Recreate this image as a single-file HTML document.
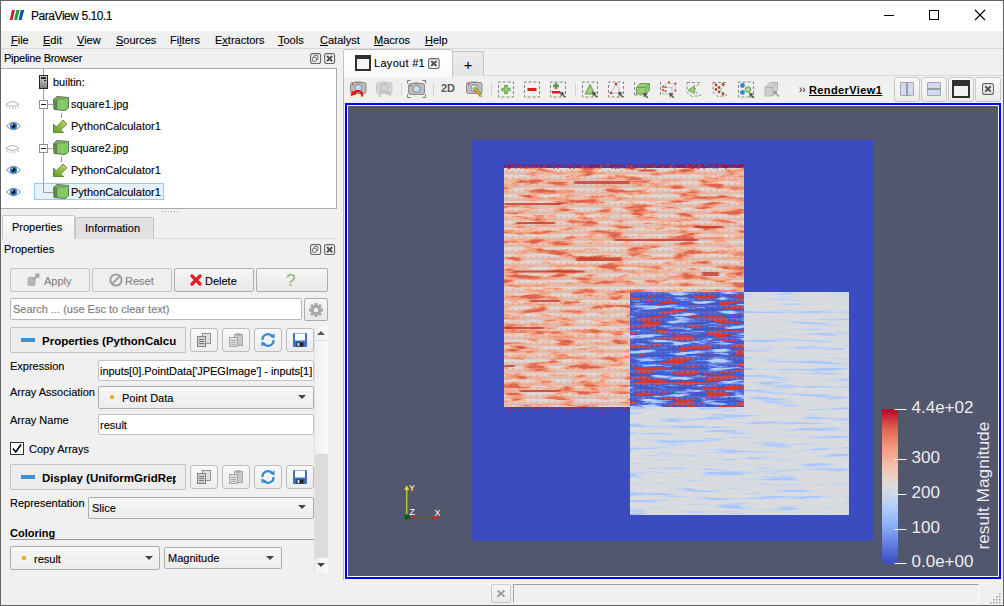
<!DOCTYPE html>
<html><head><meta charset="utf-8">
<style>
*{box-sizing:border-box}
html,body{margin:0;padding:0;width:1004px;height:606px;overflow:hidden;background:#f0f0f0;font-family:"Liberation Sans",sans-serif;font-size:11px;color:#000}
.a{position:absolute}
.t{position:absolute;white-space:nowrap;line-height:13px;-webkit-text-stroke:0.12px currentColor}
.u{text-decoration:underline}
.btn{position:absolute;border:1px solid #adadad;border-radius:2px;background:linear-gradient(#f6f6f6,#e8e8e8)}
.fld{position:absolute;border:1px solid #abadb3;border-radius:2px;background:#fff}
.cmb{position:absolute;border:1px solid #adadad;border-radius:2px;background:linear-gradient(#f7f7f7,#ececec)}
.arr{position:absolute;width:0;height:0;border-left:4px solid transparent;border-right:4px solid transparent;border-top:4px solid #444}
.dot{position:absolute;width:4px;height:4px;background:#e8b020;border-radius:1px}
.b{font-weight:bold;-webkit-text-stroke:0}
</style></head><body>
<div class="a" style="left:0;top:0;width:1004px;height:606px;background:#f0f0f0"></div>
<!-- title bar -->
<div class="a" style="left:0;top:0;width:1004px;height:31px;background:#fff"></div>
<svg class="a" style="left:9px;top:9px" width="17" height="12" viewBox="0 0 17 12">
<polygon points="0.7,11 3.6,11 6,1 3,1" fill="#c8202a"/>
<polygon points="5.1,11 8.1,11 10.6,1 7.3,1" fill="#20a040"/>
<polygon points="9.6,11 12.5,11 15.3,1 11.8,1" fill="#1050a0"/>
</svg>
<div class="t" style="left:31px;top:10px;font-size:12px;letter-spacing:-0.45px">ParaView 5.10.1</div>
<div class="a" style="left:884px;top:15px;width:10px;height:1px;background:#000"></div>
<div class="a" style="left:929px;top:10px;width:10px;height:10px;border:1px solid #000"></div>
<svg class="a" style="left:974px;top:9px" width="12" height="12"><path d="M1,1 L11,11 M11,1 L1,11" stroke="#000" stroke-width="1.1"/></svg>
<!-- menu -->
<div class="a" style="left:0;top:48px;width:1004px;height:1px;background:#dadada"></div>
<div class="t" style="left:11px;top:34px"><span class="u">F</span>ile</div>
<div class="t" style="left:43px;top:34px"><span class="u">E</span>dit</div>
<div class="t" style="left:77px;top:34px"><span class="u">V</span>iew</div>
<div class="t" style="left:116px;top:34px"><span class="u">S</span>ources</div>
<div class="t" style="left:170px;top:34px">Fi<span class="u">l</span>ters</div>
<div class="t" style="left:215px;top:34px">E<span class="u">x</span>tractors</div>
<div class="t" style="left:278px;top:34px"><span class="u">T</span>ools</div>
<div class="t" style="left:320px;top:34px"><span class="u">C</span>atalyst</div>
<div class="t" style="left:374px;top:34px"><span class="u">M</span>acros</div>
<div class="t" style="left:425px;top:34px"><span class="u">H</span>elp</div>

<!-- LEFT DOCK -->
<div class="t" style="left:4px;top:52px;letter-spacing:-0.28px">Pipeline Browser</div>
<svg class="a" style="left:310px;top:53px" width="26" height="11" viewBox="0 0 26 11">
<rect x="0.6" y="0.6" width="10" height="10" rx="2" fill="#f6f6f6" stroke="#666" stroke-width="1.1"/>
<rect x="3.8" y="2.6" width="4.2" height="4.2" rx="1" fill="none" stroke="#666" stroke-width="1"/><rect x="2.4" y="4.4" width="4" height="4" rx="1" fill="#f6f6f6" stroke="#666" stroke-width="1"/>
<rect x="14.6" y="0.6" width="10" height="10" rx="2" fill="#f6f6f6" stroke="#666" stroke-width="1.1"/>
<path d="M17,3 L22.2,8.2 M22.2,3 L17,8.2" stroke="#555" stroke-width="2"/>
</svg>
<!-- tree -->
<div class="a" style="left:1px;top:68px;width:336px;height:141px;background:#fff;border:1px solid #a9a9a9;border-left:none"></div>
<div class="a" style="left:34px;top:183px;width:130px;height:17px;background:#e5f1fb;border:1px solid #99c9ef"></div>
<div class="a" style="left:43px;top:69px;width:1px;height:124px;background:#a0a0a0"></div>
<div class="a" style="left:43px;top:192px;width:10px;height:1px;background:#a0a0a0"></div>
<!-- builtin icon -->
<svg class="a" style="left:39px;top:75px" width="9" height="14" viewBox="0 0 9 14">
<defs><linearGradient id="gs" x1="0" y1="0" x2="0" y2="1"><stop offset="0" stop-color="#d8d8d8"/><stop offset="1" stop-color="#7a7a7a"/></linearGradient></defs>
<rect x="0.5" y="0.5" width="8" height="13" fill="url(#gs)" stroke="#222"/>
<rect x="2" y="2" width="5" height="2" fill="#222"/><rect x="5" y="5" width="2" height="1" fill="#222"/>
</svg>
<div class="t" style="left:53px;top:76px">builtin:</div>
<!-- rows -->
<svg class="a" style="left:5px;top:100px" width="15" height="10" viewBox="0 0 15 10">
<path d="M0.8,4.5 Q7.5,-1.5 14.2,4.5" fill="none" stroke="#a8a8a8" stroke-width="0.9"/>
<path d="M0.8,4.5 Q7.5,8 14.2,4.5" fill="none" stroke="#a8a8a8" stroke-width="0.9"/>
<path d="M2.5,6 L1.5,8 M5,7 L4.5,9 M7.5,7.3 L7.5,9.3 M10,7 L10.5,9 M12.5,6 L13.5,8" stroke="#b0b0b0" stroke-width="0.8"/>
</svg>
<div class="a" style="left:39px;top:100px;width:9px;height:9px;border:1px solid #909090;background:#fff"></div><div class="a" style="left:41px;top:104px;width:5px;height:1px;background:#222"></div><div class="a" style="left:48px;top:104px;width:5px;height:1px;background:#a0a0a0"></div>
<svg class="a" style="left:53px;top:96px" width="16" height="15" viewBox="0 0 16 15">
<path d="M0.5,3.5 L4,0.5 L15.5,1.5 L15.5,12 L12,14.5 L1,13.5 Z" fill="#5e8e46" stroke="#5a6650" stroke-width="0.9"/>
<path d="M4,3.5 L15,2 L15,12 L11.5,14 L4,13 Z" fill="#82c866"/>
<path d="M4,0.8 L15.2,1.8 L11.5,4 L1,3.6 Z" fill="#76a860"/>
<path d="M4,3.6 L4,13.2" stroke="#5a7a48" stroke-width="0.6"/>
<path d="M9.5,4 L9.5,13.5" stroke="#9ad880" stroke-width="0.5"/>
</svg>
<div class="t" style="left:71px;top:98px">square1.jpg</div>
<div class="a" style="left:61px;top:113px;width:1px;height:5px;background:#909090"></div>
<svg class="a" style="left:6px;top:121px" width="15" height="10" viewBox="0 0 15 10">
<path d="M0.5,5 Q7.5,-2.5 14.5,5 Q7.5,12.5 0.5,5 Z" fill="#fff" stroke="#6a7a8a" stroke-width="0.9"/>
<circle cx="7.5" cy="5" r="3.6" fill="#2f7fd0"/><circle cx="7.5" cy="5" r="2" fill="#0a1020"/><circle cx="6.3" cy="3.8" r="0.8" fill="#fff"/>
</svg>
<svg class="a" style="left:53px;top:119px" width="15" height="14" viewBox="0 0 15 14">
<defs><linearGradient id="ga53119" x1="1" y1="0" x2="0" y2="1"><stop offset="0" stop-color="#c8e070"/><stop offset="1" stop-color="#5a9a20"/></linearGradient></defs>
<path d="M0.5,13.5 L0.5,5 L3.5,8 L10,1 L14,5 L7.5,11 L10.5,13.5 Z" fill="url(#ga53119)" stroke="#4a7a20" stroke-width="0.8"/>
</svg>
<div class="t" style="left:71px;top:120px">PythonCalculator1</div>
<svg class="a" style="left:5px;top:144px" width="15" height="10" viewBox="0 0 15 10">
<path d="M0.8,4.5 Q7.5,-1.5 14.2,4.5" fill="none" stroke="#a8a8a8" stroke-width="0.9"/>
<path d="M0.8,4.5 Q7.5,8 14.2,4.5" fill="none" stroke="#a8a8a8" stroke-width="0.9"/>
<path d="M2.5,6 L1.5,8 M5,7 L4.5,9 M7.5,7.3 L7.5,9.3 M10,7 L10.5,9 M12.5,6 L13.5,8" stroke="#b0b0b0" stroke-width="0.8"/>
</svg>
<div class="a" style="left:39px;top:144px;width:9px;height:9px;border:1px solid #909090;background:#fff"></div><div class="a" style="left:41px;top:148px;width:5px;height:1px;background:#222"></div><div class="a" style="left:48px;top:148px;width:5px;height:1px;background:#a0a0a0"></div>
<svg class="a" style="left:53px;top:140px" width="16" height="15" viewBox="0 0 16 15">
<path d="M0.5,3.5 L4,0.5 L15.5,1.5 L15.5,12 L12,14.5 L1,13.5 Z" fill="#5e8e46" stroke="#5a6650" stroke-width="0.9"/>
<path d="M4,3.5 L15,2 L15,12 L11.5,14 L4,13 Z" fill="#82c866"/>
<path d="M4,0.8 L15.2,1.8 L11.5,4 L1,3.6 Z" fill="#76a860"/>
<path d="M4,3.6 L4,13.2" stroke="#5a7a48" stroke-width="0.6"/>
<path d="M9.5,4 L9.5,13.5" stroke="#9ad880" stroke-width="0.5"/>
</svg>
<div class="t" style="left:71px;top:142px">square2.jpg</div>
<div class="a" style="left:61px;top:157px;width:1px;height:5px;background:#909090"></div>
<svg class="a" style="left:6px;top:165px" width="15" height="10" viewBox="0 0 15 10">
<path d="M0.5,5 Q7.5,-2.5 14.5,5 Q7.5,12.5 0.5,5 Z" fill="#fff" stroke="#6a7a8a" stroke-width="0.9"/>
<circle cx="7.5" cy="5" r="3.6" fill="#2f7fd0"/><circle cx="7.5" cy="5" r="2" fill="#0a1020"/><circle cx="6.3" cy="3.8" r="0.8" fill="#fff"/>
</svg>
<svg class="a" style="left:53px;top:163px" width="15" height="14" viewBox="0 0 15 14">
<defs><linearGradient id="ga53163" x1="1" y1="0" x2="0" y2="1"><stop offset="0" stop-color="#c8e070"/><stop offset="1" stop-color="#5a9a20"/></linearGradient></defs>
<path d="M0.5,13.5 L0.5,5 L3.5,8 L10,1 L14,5 L7.5,11 L10.5,13.5 Z" fill="url(#ga53163)" stroke="#4a7a20" stroke-width="0.8"/>
</svg>
<div class="t" style="left:71px;top:164px">PythonCalculator1</div>
<svg class="a" style="left:6px;top:187px" width="15" height="10" viewBox="0 0 15 10">
<path d="M0.5,5 Q7.5,-2.5 14.5,5 Q7.5,12.5 0.5,5 Z" fill="#fff" stroke="#6a7a8a" stroke-width="0.9"/>
<circle cx="7.5" cy="5" r="3.6" fill="#2f7fd0"/><circle cx="7.5" cy="5" r="2" fill="#0a1020"/><circle cx="6.3" cy="3.8" r="0.8" fill="#fff"/>
</svg>
<svg class="a" style="left:53px;top:184px" width="16" height="15" viewBox="0 0 16 15">
<path d="M0.5,3.5 L4,0.5 L15.5,1.5 L15.5,12 L12,14.5 L1,13.5 Z" fill="#5e8e46" stroke="#5a6650" stroke-width="0.9"/>
<path d="M4,3.5 L15,2 L15,12 L11.5,14 L4,13 Z" fill="#82c866"/>
<path d="M4,0.8 L15.2,1.8 L11.5,4 L1,3.6 Z" fill="#76a860"/>
<path d="M4,3.6 L4,13.2" stroke="#5a7a48" stroke-width="0.6"/>
<path d="M9.5,4 L9.5,13.5" stroke="#9ad880" stroke-width="0.5"/>
</svg>
<div class="t" style="left:71px;top:186px">PythonCalculator1</div>
<div class="a" style="left:162px;top:211px;width:16px;height:1px;background:repeating-linear-gradient(90deg,#a0a0a0 0 1px,transparent 1px 3px)"></div>

<!-- tabs -->
<div class="a" style="left:74px;top:238px;width:263px;height:1px;background:#dadada"></div>
<div class="a" style="left:75px;top:217px;width:79px;height:22px;background:#e1e1e1;border:1px solid #c4c4c4;border-bottom:none;border-radius:2px 2px 0 0"></div>
<div class="a" style="left:2px;top:215px;width:73px;height:24px;background:linear-gradient(#fbfbfb,#f0f0f0);border:1px solid #c8c8c8;border-bottom:none;border-radius:2px 2px 0 0"></div>
<div class="t" style="left:12px;top:221px">Properties</div>
<div class="t" style="left:85px;top:222px">Information</div>

<div class="t" style="left:4px;top:243px">Properties</div>
<svg class="a" style="left:310px;top:244px" width="26" height="11" viewBox="0 0 26 11">
<rect x="0.6" y="0.6" width="10" height="10" rx="2" fill="#f6f6f6" stroke="#666" stroke-width="1.1"/>
<rect x="3.8" y="2.6" width="4.2" height="4.2" rx="1" fill="none" stroke="#666" stroke-width="1"/><rect x="2.4" y="4.4" width="4" height="4" rx="1" fill="#f6f6f6" stroke="#666" stroke-width="1"/>
<rect x="14.6" y="0.6" width="10" height="10" rx="2" fill="#f6f6f6" stroke="#666" stroke-width="1.1"/>
<path d="M17,3 L22.2,8.2 M22.2,3 L17,8.2" stroke="#555" stroke-width="2"/>
</svg>
<!-- buttons -->
<div class="btn" style="left:10px;top:268px;width:80px;height:24px;border-color:#c2c2c2;background:#efefef"></div>
<svg class="a" style="left:27px;top:273px" width="13" height="13" viewBox="0 0 13 13">
<path d="M1,5 L5,4 L8,5 L8,12 L4,13 L1,12 Z" fill="#b8b8b8" stroke="#9a9a9a" stroke-width="0.6"/>
<path d="M6,7 L11,2 M8,1.5 L11.5,1.5 L11.5,5" stroke="#a8a8a8" stroke-width="2" fill="none"/>
</svg>
<div class="t" style="left:44px;top:275px;color:#838383">Apply</div>
<div class="btn" style="left:92px;top:268px;width:80px;height:24px;border-color:#c2c2c2;background:#efefef"></div>
<svg class="a" style="left:109px;top:273px" width="14" height="14" viewBox="0 0 14 14"><circle cx="7" cy="7" r="5.6" fill="none" stroke="#a0a0a0" stroke-width="2"/><path d="M3,11 L11,3" stroke="#a0a0a0" stroke-width="2"/></svg>
<div class="t" style="left:125px;top:275px;color:#838383">Reset</div>
<div class="btn" style="left:174px;top:268px;width:80px;height:24px"></div>
<svg class="a" style="left:190px;top:274px" width="12" height="12" viewBox="0 0 12 12"><path d="M2,2 L10,10 M10,2 L2,10" stroke="#e02020" stroke-width="3.2" stroke-linecap="round"/></svg>
<div class="t" style="left:205px;top:275px">Delete</div>
<div class="btn" style="left:256px;top:268px;width:72px;height:24px"></div>
<div class="t" style="left:286px;top:271px;font-size:17px;line-height:19px;color:#8db870">?</div>
<!-- search -->
<div class="fld" style="left:10px;top:298px;width:292px;height:22px;border-color:#b8b8b8"></div>
<div class="t" style="left:13px;top:303px;color:#7a7a7a">Search ... (use Esc to clear text)</div>
<div class="btn" style="left:304px;top:298px;width:24px;height:23px"></div>
<svg class="a" style="left:308px;top:302px" width="16" height="16" viewBox="0 0 16 16"><g fill="#a8a8a8"><circle cx="8" cy="8" r="5.2"/><rect x="6.5" y="1" width="3" height="14"/><rect x="1" y="6.5" width="14" height="3"/><rect x="6.5" y="1" width="3" height="14" transform="rotate(45 8 8)"/><rect x="6.5" y="1" width="3" height="14" transform="rotate(-45 8 8)"/></g><circle cx="8" cy="8" r="2.3" fill="#efefef"/></svg>

<!-- scroll area -->
<!-- section header properties -->
<div class="btn" style="left:10px;top:327px;width:176px;height:26px;background:#ececec;border-color:#c4c4c4;border-radius:1px"></div>
<div class="a" style="left:21px;top:338px;width:14px;height:4px;background:#3a92d0"></div>
<div class="t b" style="left:42px;top:335px;font-size:11.5px;width:134px;overflow:hidden">Properties (PythonCalculator)</div>
<div class="btn" style="left:190px;top:328px;width:28px;height:24px;background:linear-gradient(#f8f8f8,#ececec);border-color:#bdbdbd;border-radius:3px"></div>
<div class="btn" style="left:222px;top:328px;width:28px;height:24px;background:linear-gradient(#f8f8f8,#ececec);border-color:#bdbdbd;border-radius:3px"></div>
<div class="btn" style="left:254px;top:328px;width:28px;height:24px;background:linear-gradient(#f8f8f8,#ececec);border-color:#bdbdbd;border-radius:3px"></div>
<div class="btn" style="left:286px;top:328px;width:28px;height:24px;background:linear-gradient(#f8f8f8,#ececec);border-color:#bdbdbd;border-radius:3px"></div>
<svg class="a" style="left:196px;top:332px" width="16" height="16" viewBox="0 0 16 16">
<rect x="6.5" y="1.5" width="8" height="10" fill="#e0e0e0" stroke="#909090"/><rect x="1.5" y="4.5" width="8" height="10" fill="#d0d0d0" stroke="#808080"/>
<path d="M3,7.5h5M3,9.5h5M3,11.5h5" stroke="#777"/></svg>
<svg class="a" style="left:228px;top:332px" width="16" height="16" viewBox="0 0 16 16">
<rect x="6.5" y="2.5" width="8" height="11" fill="#c8c8c8" stroke="#a8a8a8"/><rect x="8.5" y="1" width="4" height="3" fill="#b0b0b0"/><rect x="1.5" y="5.5" width="8" height="9" fill="#dcdcdc" stroke="#a8a8a8"/>
<path d="M3,8.5h5M3,10.5h5M3,12.5h5" stroke="#aaa"/></svg>
<svg class="a" style="left:260px;top:332px" width="16" height="16" viewBox="0 0 16 16">
<path d="M2.5,8 A5.5,5.5 0 0 1 12.5,4.5" fill="none" stroke="#2e8ac8" stroke-width="2.2"/><path d="M13.5,8 A5.5,5.5 0 0 1 3.5,11.5" fill="none" stroke="#2e8ac8" stroke-width="2.2"/>
<path d="M10,4.5 L14.5,1.5 L14.5,6.5 Z" fill="#2e8ac8"/><path d="M6,11.5 L1.5,14.5 L1.5,9.5 Z" fill="#2e8ac8"/></svg>
<svg class="a" style="left:292px;top:332px" width="16" height="16" viewBox="0 0 16 16">
<rect x="1" y="1" width="14" height="14" rx="1" fill="#3f6fc0"/><rect x="3" y="1.5" width="10" height="7" fill="#fff"/><rect x="4.5" y="10.5" width="7" height="4" fill="#222"/><rect x="5.5" y="11" width="2" height="3" fill="#ddd"/></svg>
<div class="t" style="left:10px;top:360px">Expression</div>
<div class="fld" style="left:98px;top:360px;width:216px;height:21px;border-color:#c2c2c2;overflow:hidden"><div class="t" style="left:1px;top:4px;letter-spacing:-0.04px">inputs[0].PointData['JPEGImage'] - inputs[1]</div></div>
<div class="t" style="left:10px;top:386px">Array Association</div>
<div class="cmb" style="left:98px;top:386px;width:216px;height:23px"></div>
<div class="dot" style="left:110px;top:395px"></div>
<div class="t" style="left:122px;top:392px">Point Data</div>
<div class="arr" style="left:298px;top:395px"></div>
<div class="t" style="left:10px;top:414px">Array Name</div>
<div class="fld" style="left:98px;top:414px;width:216px;height:21px;border-color:#c2c2c2"></div>
<div class="t" style="left:100px;top:419px">result</div>
<div class="a" style="left:10px;top:442px;width:14px;height:13px;background:#fff;border:1px solid #333"></div>
<svg class="a" style="left:11px;top:443px" width="12" height="11"><path d="M2,5.5 L4.8,9 L10,1.5" fill="none" stroke="#000" stroke-width="1.6"/></svg>
<div class="t" style="left:29px;top:443px">Copy Arrays</div>
<!-- display section -->
<div class="btn" style="left:10px;top:464px;width:176px;height:26px;background:#ececec;border-color:#c4c4c4;border-radius:1px"></div>
<div class="a" style="left:21px;top:475px;width:14px;height:4px;background:#3a92d0"></div>
<div class="t b" style="left:42px;top:472px;font-size:11.5px;width:134px;overflow:hidden">Display (UniformGridRepresentation)</div>
<div class="btn" style="left:190px;top:465px;width:28px;height:24px;background:linear-gradient(#f8f8f8,#ececec);border-color:#bdbdbd;border-radius:3px"></div>
<div class="btn" style="left:222px;top:465px;width:28px;height:24px;background:linear-gradient(#f8f8f8,#ececec);border-color:#bdbdbd;border-radius:3px"></div>
<div class="btn" style="left:254px;top:465px;width:28px;height:24px;background:linear-gradient(#f8f8f8,#ececec);border-color:#bdbdbd;border-radius:3px"></div>
<div class="btn" style="left:286px;top:465px;width:28px;height:24px;background:linear-gradient(#f8f8f8,#ececec);border-color:#bdbdbd;border-radius:3px"></div>
<svg class="a" style="left:196px;top:469px" width="16" height="16" viewBox="0 0 16 16">
<rect x="6.5" y="1.5" width="8" height="10" fill="#e0e0e0" stroke="#909090"/><rect x="1.5" y="4.5" width="8" height="10" fill="#d0d0d0" stroke="#808080"/>
<path d="M3,7.5h5M3,9.5h5M3,11.5h5" stroke="#777"/></svg>
<svg class="a" style="left:228px;top:469px" width="16" height="16" viewBox="0 0 16 16">
<rect x="6.5" y="2.5" width="8" height="11" fill="#c8c8c8" stroke="#a8a8a8"/><rect x="8.5" y="1" width="4" height="3" fill="#b0b0b0"/><rect x="1.5" y="5.5" width="8" height="9" fill="#dcdcdc" stroke="#a8a8a8"/>
<path d="M3,8.5h5M3,10.5h5M3,12.5h5" stroke="#aaa"/></svg>
<svg class="a" style="left:260px;top:469px" width="16" height="16" viewBox="0 0 16 16">
<path d="M2.5,8 A5.5,5.5 0 0 1 12.5,4.5" fill="none" stroke="#2e8ac8" stroke-width="2.2"/><path d="M13.5,8 A5.5,5.5 0 0 1 3.5,11.5" fill="none" stroke="#2e8ac8" stroke-width="2.2"/>
<path d="M10,4.5 L14.5,1.5 L14.5,6.5 Z" fill="#2e8ac8"/><path d="M6,11.5 L1.5,14.5 L1.5,9.5 Z" fill="#2e8ac8"/></svg>
<svg class="a" style="left:292px;top:469px" width="16" height="16" viewBox="0 0 16 16">
<rect x="1" y="1" width="14" height="14" rx="1" fill="#3f6fc0"/><rect x="3" y="1.5" width="10" height="7" fill="#fff"/><rect x="4.5" y="10.5" width="7" height="4" fill="#222"/><rect x="5.5" y="11" width="2" height="3" fill="#ddd"/></svg>
<div class="t" style="left:10px;top:497px">Representation</div>
<div class="cmb" style="left:88px;top:497px;width:226px;height:22px"></div>
<div class="t" style="left:92px;top:502px">Slice</div>
<div class="arr" style="left:298px;top:505px"></div>
<div class="t b" style="left:10px;top:527px">Coloring</div>
<div class="a" style="left:10px;top:539px;width:304px;height:1px;background:#9a9a9a"></div>
<div class="cmb" style="left:10px;top:546px;width:150px;height:24px"></div>
<div class="dot" style="left:22px;top:556px"></div>
<div class="t" style="left:34px;top:553px">result</div>
<div class="arr" style="left:145px;top:556px"></div>
<div class="cmb" style="left:164px;top:547px;width:118px;height:22px"></div>
<div class="t" style="left:168px;top:552px">Magnitude</div>
<div class="arr" style="left:266px;top:556px"></div>
<!-- scrollbar -->
<div class="a" style="left:314px;top:326px;width:14px;height:247px;background:linear-gradient(90deg,#f0f0f0,#fafafa)"></div>
<div class="a" style="left:314px;top:326px;width:1px;height:247px;background:#e0e0e0"></div>
<div class="a" style="left:314px;top:340px;width:14px;height:1px;background:#dcdcdc"></div>
<div class="arr" style="left:317px;top:331px;border-top:none;border-bottom:4px solid #555"></div>
<div class="a" style="left:315px;top:454px;width:13px;height:104px;background:#dcdcdc"></div>
<div class="arr" style="left:317px;top:563px"></div>



<!-- RIGHT -->
<!-- tab bar -->
<div class="a" style="left:343px;top:75px;width:660px;height:1px;background:#d9d9d9"></div>
<div class="a" style="left:452px;top:51px;width:32px;height:25px;background:linear-gradient(#ececec,#e4e4e4);border:1px solid #c4c4c4;border-bottom:none;border-radius:3px 3px 0 0"></div>
<div class="t" style="left:464px;top:57px;font-size:14px;line-height:16px">+</div>
<div class="a" style="left:343px;top:49px;width:110px;height:28px;background:linear-gradient(#fff,#fafafa);border:1px solid #c4c4c4;border-bottom:none;border-radius:3px 3px 0 0"></div>
<div class="a" style="left:355px;top:55px;width:16px;height:16px;border:2px solid #303030;border-top:4px solid #303030;background:#f4f4f4"></div>
<div class="t" style="left:374px;top:57px;letter-spacing:0.3px">Layout #1</div>
<svg class="a" style="left:428px;top:58px" width="12" height="11" viewBox="0 0 12 11"><rect x="0.6" y="0.6" width="10.5" height="10" rx="2" fill="#f6f6f6" stroke="#666" stroke-width="1.1"/><path d="M3.2,3 L8.5,8 M8.5,3 L3.2,8" stroke="#555" stroke-width="2"/></svg>
<!-- frame of tab widget -->
<div class="a" style="left:343px;top:76px;width:1px;height:504px;background:#b8b8b8"></div>
<!-- toolbar -->
<svg class="a" style="left:350px;top:81px" width="17" height="17" viewBox="0 0 17 17"><rect x="5" y="0.5" width="6" height="2" fill="#8a8a8a"/><rect x="0.5" y="1.5" width="15.5" height="11" rx="2" fill="#bdbdbd" stroke="#8a8a8a"/><rect x="2" y="2.5" width="1.5" height="1.5" fill="#e03030"/><circle cx="8.3" cy="7" r="4" fill="#9a9a9a"/><circle cx="8.3" cy="7" r="2.8" fill="#bfe4f8"/><path d="M12,15.5 C13,10 7,8.5 4,12" fill="none" stroke="#e01818" stroke-width="2.4"/><path d="M0.5,15 L2,9.5 L6.5,13.5 Z" fill="#e01818"/></svg>
<svg class="a" style="left:376px;top:81px" width="17" height="17" viewBox="0 0 17 17"><rect x="5" y="0.5" width="6" height="2" fill="#c8c8c8"/><rect x="0.5" y="1.5" width="15.5" height="11" rx="2" fill="#d4d4d4" stroke="#c8c8c8"/><circle cx="8.3" cy="7" r="3.8" fill="none" stroke="#bcbcbc" stroke-width="1.2"/><path d="M4,16 C3,10 9,8.5 12,12" fill="none" stroke="#c4c4c4" stroke-width="2.2"/><path d="M15.5,15 L14,9.5 L9.5,13.5 Z" fill="#c4c4c4"/></svg>
<div class="a" style="left:401px;top:83px;width:1px;height:13px;background:#d4d4d4"></div>
<div class="a" style="left:433px;top:83px;width:1px;height:13px;background:#d4d4d4"></div>
<div class="a" style="left:491px;top:83px;width:1px;height:13px;background:#d4d4d4"></div>
<div class="a" style="left:575px;top:83px;width:1px;height:13px;background:#d4d4d4"></div>
<svg class="a" style="left:407px;top:80px" width="19" height="18" viewBox="0 0 19 18">
<path d="M0.5,3.5 V0.5 H3.5 M15.5,0.5 H18.5 V3.5 M18.5,14.5 V17.5 H15.5 M3.5,17.5 H0.5 V14.5" fill="none" stroke="#777" stroke-width="1"/>
<rect x="7" y="2.5" width="5" height="2" fill="#8a8a8a"/>
<rect x="1.5" y="3.5" width="16" height="11" rx="2" fill="#bdbdbd" stroke="#8a8a8a"/>
<rect x="3" y="5" width="1.5" height="1.5" fill="#e03030"/>
<circle cx="9.5" cy="9" r="4" fill="#9a9a9a"/><circle cx="9.5" cy="9" r="2.8" fill="#bfe4f8"/></svg>
<div class="t b" style="left:441px;top:82px;font-size:11px;color:#5c5c44">2D</div>
<svg class="a" style="left:466px;top:81px" width="17" height="17" viewBox="0 0 17 17"><rect x="5" y="0.5" width="6" height="2" fill="#8a8a8a"/><rect x="0.5" y="1.5" width="15.5" height="11" rx="2" fill="#bdbdbd" stroke="#8a8a8a"/><rect x="2" y="2.5" width="1.5" height="1.5" fill="#e03030"/><circle cx="8.3" cy="7" r="4" fill="#9a9a9a"/><circle cx="8.3" cy="7" r="2.8" fill="#bfe4f8"/><path d="M8,7 L15,14.5" stroke="#6a5a20" stroke-width="3.2"/><path d="M8,7 L15,14.5" stroke="#e8b030" stroke-width="2"/><path d="M14,13.5 L16,16 L13.3,15.2Z" fill="#fff" stroke="#666" stroke-width="0.5"/></svg>
<svg class="a" style="left:498px;top:81px" width="17" height="17" viewBox="0 0 17 16"><rect x="0.5" y="0.5" width="15" height="15" fill="none" stroke="#858585" stroke-dasharray="3,2" stroke-dashoffset="1" stroke-width="1"/><path d="M8,3.5 V12.5 M3.5,8 H12.5" stroke="#5a9a40" stroke-width="3.6"/><path d="M8,4.5 V11.5 M4.5,8 H11.5" stroke="#9cd07c" stroke-width="1.8"/></svg>
<svg class="a" style="left:524px;top:81px" width="17" height="17" viewBox="0 0 17 16"><rect x="0.5" y="0.5" width="15" height="15" fill="none" stroke="#858585" stroke-dasharray="3,2" stroke-dashoffset="1" stroke-width="1"/><rect x="3.5" y="6.5" width="9" height="3" fill="#e02020"/></svg>
<svg class="a" style="left:550px;top:81px" width="17" height="17" viewBox="0 0 17 16"><rect x="0.5" y="0.5" width="15" height="15" fill="none" stroke="#858585" stroke-dasharray="3,2" stroke-dashoffset="1" stroke-width="1"/><path d="M6,1.5 V7.5 M3,4.5 H9" stroke="#5aa040" stroke-width="2.6"/><rect x="2" y="9.5" width="8" height="2.5" fill="#e02020"/><path d="M10,10 L15,11.5 L13,12.5 L15.5,15 L14.5,16 L12,13.5 L11,15.5 Z" fill="#555"/></svg>
<svg class="a" style="left:582px;top:81px" width="17" height="17" viewBox="0 0 17 16"><rect x="0.5" y="0.5" width="15" height="15" fill="none" stroke="#858585" stroke-dasharray="3,2" stroke-dashoffset="1" stroke-width="1"/><path d="M3,12.5 L8,3 L13,12.5 Z" fill="#98cc78" stroke="#5a8a40" stroke-width="0.8"/><path d="M10,10 L15,11.5 L13,12.5 L15.5,15 L14.5,16 L12,13.5 L11,15.5 Z" fill="#555"/></svg>
<svg class="a" style="left:608px;top:81px" width="17" height="17" viewBox="0 0 17 16"><rect x="0.5" y="0.5" width="15" height="15" fill="none" stroke="#858585" stroke-dasharray="3,2" stroke-dashoffset="1" stroke-width="1"/><path d="M3,11.5 L8,2.5 L13,11.5 Z" fill="none" stroke="#999" stroke-width="0.6"/><circle cx="8" cy="2.5" r="1.3" fill="#c03a2a"/><circle cx="3" cy="11.5" r="1.3" fill="#c03a2a"/><path d="M10,10 L15,11.5 L13,12.5 L15.5,15 L14.5,16 L12,13.5 L11,15.5 Z" fill="#555"/></svg>
<svg class="a" style="left:634px;top:81px" width="17" height="17" viewBox="0 0 17 16"><path d="M0.5,0.5 V13.5 M0.5,13.5 H8" fill="none" stroke="#8a8a8a" stroke-dasharray="3,2"/><path d="M2.5,6 L6,2 L15.5,2 L15.5,9 L12,12.5 L2.5,12.5 Z" fill="#98cc78" stroke="#5a8a40" stroke-width="0.8"/><path d="M2.5,6 L12,6 L15.5,2 M12,6 V12.5" fill="none" stroke="#5a8a40" stroke-width="0.7"/><path d="M9,11 L14,12.5 L12,13.5 L14.5,16 L13.5,17 L11,14.5 L10,16.5 Z" fill="#555"/></svg>
<svg class="a" style="left:660px;top:81px" width="17" height="17" viewBox="0 0 17 16"><path d="M0.5,0.5 V13.5" fill="none" stroke="#8a8a8a" stroke-dasharray="3,2"/><path d="M2.5,6 L6,2 L15.5,2 L15.5,9 L12,12.5 L2.5,12.5 Z M2.5,6 L12,6 L15.5,2 M12,6 V12.5" fill="none" stroke="#aaa" stroke-width="0.6"/><g fill="#e03a2a"><circle cx="9" cy="0.8" r="1.1"/><circle cx="15.5" cy="2" r="1.1"/><circle cx="15.5" cy="9" r="1.1"/><circle cx="3" cy="5" r="1.1"/><circle cx="5.5" cy="5.5" r="1.1"/><circle cx="3" cy="8.5" r="1.1"/><circle cx="5.5" cy="9.5" r="1.1"/></g><path d="M9,11 L14,12.5 L12,13.5 L14.5,16 L13.5,17 L11,14.5 L10,16.5 Z" fill="#555"/></svg>
<svg class="a" style="left:686px;top:81px" width="17" height="17" viewBox="0 0 17 16"><path d="M1,1 L14,1 L8,9 L15,14 L6,15 L1,11 Z" fill="none" stroke="#8a8a8a" stroke-dasharray="3,2"/><path d="M2,9 L8.5,4 L8.5,12 Z" fill="#98cc78" stroke="#5a8a40" stroke-width="0.7"/></svg>
<svg class="a" style="left:712px;top:81px" width="17" height="17" viewBox="0 0 17 16"><path d="M1,1 L14,1 L8,9 L15,14 L6,15 L1,11 Z" fill="none" stroke="#8a8a8a" stroke-dasharray="3,2"/><g fill="#b04a30"><circle cx="4" cy="3.5" r="1.4"/><circle cx="11" cy="3" r="1.4"/><circle cx="7" cy="6" r="1.4"/><circle cx="4" cy="8" r="1.4"/><circle cx="7" cy="10.5" r="1.4"/><circle cx="11" cy="12.5" r="1.4"/></g></svg>
<svg class="a" style="left:738px;top:81px" width="17" height="17" viewBox="0 0 17 16"><rect x="0.5" y="0.5" width="15" height="15" fill="none" stroke="#858585" stroke-dasharray="3,2" stroke-dashoffset="1" stroke-width="1"/><circle cx="4.5" cy="4" r="2.4" fill="#2a8ad0"/><circle cx="4.5" cy="11" r="2.4" fill="#2a8ad0"/><circle cx="10" cy="8" r="2.8" fill="#a8d88a" stroke="#5a8a40" stroke-width="0.8"/><path d="M11,11 L16,12.5 L14,13.5 L16.5,16 L15.5,17 L13,14.5 L12,16.5 Z" fill="#555"/></svg>
<svg class="a" style="left:764px;top:81px" width="17" height="17" viewBox="0 0 17 16"><path d="M1,6 L6,1 L13.5,1 L13.5,9 L8.5,14.5 L1,14.5 Z" fill="#d0d0d0" stroke="#a8a8a8" stroke-width="0.8"/><path d="M1,6 L8.5,6 L13.5,1 M8.5,6 V14.5" fill="none" stroke="#a8a8a8" stroke-width="0.8"/><path d="M10,10 L15,15 M10,10 L13,10.5 M10,10 L10.5,13" stroke="#999" stroke-width="1.4"/></svg>
<div class="t" style="left:799px;top:83px;font-size:10px;color:#333">&#8250;&#8250;</div>
<div class="t b u" style="left:809px;top:84px;letter-spacing:0.4px">RenderView1</div>
<!-- split buttons -->
<div class="btn" style="left:894px;top:77px;width:26px;height:25px;background:linear-gradient(#f8f8f8,#ececec);border-color:#c8c8c8;border-radius:3px"></div>
<div class="a" style="left:900px;top:82px;width:14px;height:14px;background:#d2daee;border:1px solid #a4a8b4;border-radius:1px"></div><div class="a" style="left:906px;top:82px;width:2px;height:14px;background:#9a9ca4"></div>
<div class="btn" style="left:921px;top:77px;width:26px;height:25px;background:linear-gradient(#f8f8f8,#ececec);border-color:#c8c8c8;border-radius:3px"></div>
<div class="a" style="left:927px;top:82px;width:14px;height:14px;background:#d2daee;border:1px solid #a4a8b4;border-radius:1px"></div><div class="a" style="left:927px;top:88px;width:14px;height:2px;background:#9a9ca4"></div>
<div class="btn" style="left:948px;top:77px;width:26px;height:25px;background:linear-gradient(#f8f8f8,#ececec);border-color:#c8c8c8;border-radius:3px"></div>
<div class="a" style="left:952px;top:80px;width:18px;height:18px;border:2px solid #303030;border-top:6px solid #303030;background:#f2f2f2"></div>
<div class="btn" style="left:975px;top:77px;width:26px;height:25px;background:linear-gradient(#f8f8f8,#ececec);border-color:#c8c8c8;border-radius:3px"></div>
<svg class="a" style="left:982px;top:83px" width="12" height="12" viewBox="0 0 12 12"><rect x="0.6" y="0.6" width="10.8" height="10.8" rx="2" fill="#f4f4f4" stroke="#666" stroke-width="1.1"/><path d="M3.2,3.2 L8.8,8.8 M8.8,3.2 L3.2,8.8" stroke="#555" stroke-width="2"/></svg>
<!-- render view -->
<div class="a" style="left:345px;top:103px;width:656px;height:476px;border:2px solid #0000ff;background:#fbfbf0"></div>
<div class="a" style="left:348px;top:106px;width:650px;height:470px;background:#52576e;overflow:hidden">
<svg class="a" style="left:0;top:0" width="650" height="470" viewBox="348 106 650 470">
<defs>
<filter id="fr" x="0" y="0" width="100%" height="100%" color-interpolation-filters="sRGB">
<feTurbulence type="fractalNoise" baseFrequency="0.04 0.2" numOctaves="5" seed="3" result="n"/>
<feColorMatrix in="n" type="matrix" values="1 0 0 0 0  1 0 0 0 0  1 0 0 0 0  0 0 0 0 1"/>
<feComponentTransfer><feFuncR type="table" tableValues="0.880 0.880 0.880 0.880 0.880 0.880 0.880 0.880 0.880 0.880 0.880 0.880 0.880 0.880 0.880 0.880 0.880 0.880 0.880 0.880 0.886 0.899 0.915 0.931 0.948 0.958 0.958 0.958 0.957 0.957 0.945 0.927 0.908 0.890 0.870 0.870 0.870 0.870 0.870 0.870 0.870 0.870 0.870 0.870 0.870 0.870 0.870 0.870"/><feFuncG type="table" tableValues="0.849 0.849 0.849 0.849 0.849 0.849 0.849 0.849 0.849 0.849 0.849 0.849 0.849 0.849 0.849 0.849 0.849 0.849 0.849 0.849 0.842 0.827 0.811 0.793 0.774 0.749 0.717 0.684 0.650 0.616 0.573 0.525 0.477 0.428 0.380 0.380 0.380 0.380 0.380 0.380 0.380 0.380 0.380 0.380 0.380 0.380 0.380 0.380"/><feFuncB type="table" tableValues="0.834 0.834 0.834 0.834 0.834 0.834 0.834 0.834 0.834 0.834 0.834 0.834 0.834 0.834 0.834 0.834 0.834 0.834 0.834 0.834 0.822 0.794 0.763 0.730 0.694 0.657 0.619 0.579 0.538 0.497 0.456 0.416 0.375 0.333 0.299 0.299 0.299 0.299 0.299 0.299 0.299 0.299 0.299 0.299 0.299 0.299 0.299 0.299"/></feComponentTransfer>
</filter>
<filter id="fb" x="0" y="0" width="100%" height="100%" color-interpolation-filters="sRGB">
<feTurbulence type="fractalNoise" baseFrequency="0.03 0.2" numOctaves="5" seed="11" result="n"/>
<feColorMatrix in="n" type="matrix" values="1 0 0 0 0  1 0 0 0 0  1 0 0 0 0  0 0 0 0 1"/>
<feComponentTransfer><feFuncR type="table" tableValues="0.728 0.728 0.728 0.728 0.728 0.728 0.728 0.728 0.728 0.728 0.728 0.728 0.728 0.728 0.728 0.728 0.728 0.728 0.728 0.728 0.728 0.728 0.728 0.728 0.728 0.728 0.728 0.713 0.678 0.644 0.610 0.578 0.545 0.511 0.477 0.445 0.415 0.386 0.361 0.340 0.320 0.303 0.287 0.274 0.265 0.265 0.265 0.265 0.265 0.265 0.265 0.265 0.265 0.265 0.265 0.265 0.802 0.802 0.802 0.802 0.802 0.802 0.802 0.802 0.802 0.802 0.802 0.802 0.802 0.802 0.802 0.802 0.802 0.802 0.802 0.802 0.802 0.802 0.802 0.802 0.802 0.802 0.802 0.802 0.802 0.802 0.802 0.802 0.802 0.802 0.802 0.802 0.802 0.802 0.802 0.802"/><feFuncG type="table" tableValues="0.819 0.819 0.819 0.819 0.819 0.819 0.819 0.819 0.819 0.819 0.819 0.819 0.819 0.819 0.819 0.819 0.819 0.819 0.819 0.819 0.819 0.819 0.819 0.819 0.819 0.819 0.819 0.814 0.789 0.762 0.736 0.710 0.682 0.644 0.607 0.571 0.536 0.504 0.473 0.445 0.419 0.396 0.375 0.358 0.346 0.345 0.345 0.345 0.345 0.345 0.345 0.345 0.345 0.345 0.345 0.345 0.228 0.228 0.228 0.228 0.228 0.228 0.228 0.228 0.228 0.228 0.228 0.228 0.228 0.228 0.228 0.228 0.228 0.228 0.228 0.228 0.228 0.228 0.228 0.228 0.228 0.228 0.228 0.228 0.228 0.228 0.228 0.228 0.228 0.228 0.228 0.228 0.228 0.228 0.228 0.228"/><feFuncB type="table" tableValues="0.964 0.964 0.964 0.964 0.964 0.964 0.964 0.964 0.964 0.964 0.964 0.964 0.964 0.964 0.964 0.964 0.964 0.964 0.964 0.964 0.964 0.964 0.964 0.964 0.964 0.964 0.964 0.974 0.981 0.985 0.989 0.993 0.992 0.969 0.947 0.926 0.906 0.887 0.868 0.850 0.833 0.817 0.804 0.792 0.785 0.784 0.784 0.784 0.784 0.784 0.784 0.784 0.784 0.784 0.784 0.784 0.237 0.237 0.237 0.237 0.237 0.237 0.237 0.237 0.237 0.237 0.237 0.237 0.237 0.237 0.237 0.237 0.237 0.237 0.237 0.237 0.237 0.237 0.237 0.237 0.237 0.237 0.237 0.237 0.237 0.237 0.237 0.237 0.237 0.237 0.237 0.237 0.237 0.237 0.237 0.237"/></feComponentTransfer>
</filter>
<filter id="fl" x="0" y="0" width="100%" height="100%" color-interpolation-filters="sRGB">
<feTurbulence type="fractalNoise" baseFrequency="0.02 0.28" numOctaves="4" seed="5" result="n"/>
<feColorMatrix in="n" type="matrix" values="1 0 0 0 0  1 0 0 0 0  1 0 0 0 0  0 0 0 0 1"/>
<feComponentTransfer><feFuncR type="table" tableValues="0.853 0.853 0.853 0.853 0.853 0.853 0.853 0.853 0.853 0.853 0.853 0.853 0.853 0.853 0.853 0.853 0.853 0.839 0.814 0.784 0.752 0.716 0.678 0.665 0.665 0.665 0.665 0.665 0.665 0.665 0.665 0.665"/><feFuncG type="table" tableValues="0.861 0.861 0.861 0.861 0.861 0.861 0.861 0.861 0.861 0.861 0.861 0.861 0.861 0.861 0.861 0.861 0.861 0.856 0.848 0.838 0.827 0.815 0.788 0.779 0.779 0.779 0.779 0.779 0.779 0.779 0.779 0.779"/><feFuncB type="table" tableValues="0.874 0.874 0.874 0.874 0.874 0.874 0.874 0.874 0.874 0.874 0.874 0.874 0.874 0.874 0.874 0.874 0.874 0.884 0.902 0.923 0.946 0.972 0.981 0.982 0.982 0.982 0.982 0.982 0.982 0.982 0.982 0.982"/></feComponentTransfer>
</filter>
<pattern id="zz" x="504" y="168" width="12" height="6.6" patternUnits="userSpaceOnUse"><path d="M0,6.6 L0,4.5 L3,1.8 L6,4.2 L9,1.5 L12,4.5 L12,6.6 Z" fill="#e07a5c" fill-opacity="0.3"/></pattern>
<pattern id="zb" x="630" y="292" width="11" height="6.5" patternUnits="userSpaceOnUse"><path d="M0,0 L2.75,4 L5.5,0.5 L8.25,4 L11,0 Z" fill="#a0b8f8" fill-opacity="0.22"/></pattern>
<filter id="bl" x="-10%" y="-100%" width="120%" height="300%"><feGaussianBlur stdDeviation="1.2 0.6"/></filter>
</defs>
<rect x="472" y="140" width="402" height="401" fill="#3b4cc0"/>
<rect x="630" y="292" width="219" height="223" fill="#ddd" filter="url(#fl)"/>
<rect x="504" y="168" width="240" height="239" fill="#ddd" filter="url(#fr)"/>
<rect x="504" y="168" width="240" height="239" fill="url(#zz)"/>
<rect x="504" y="164.5" width="240" height="3" fill="#b40426" fill-opacity="0.55"/>
<rect x="574" y="181" width="56" height="3" fill="#c43a2c" fill-opacity="0.8" filter="url(#bl)"/>
<rect x="639" y="169.5" width="17" height="2" fill="#c43a2c" fill-opacity="0.8" filter="url(#bl)"/>
<rect x="504" y="203" width="57" height="2" fill="#c43a2c" fill-opacity="0.8" filter="url(#bl)"/>
<rect x="614" y="239" width="84" height="2" fill="#c43a2c" fill-opacity="0.8" filter="url(#bl)"/>
<rect x="576" y="257.5" width="46" height="3.5" fill="#c43a2c" fill-opacity="0.8" filter="url(#bl)"/>
<rect x="513" y="270.5" width="71" height="2" fill="#c43a2c" fill-opacity="0.8" filter="url(#bl)"/>
<rect x="702" y="272" width="17" height="4" fill="#c43a2c" fill-opacity="0.8" filter="url(#bl)"/>
<rect x="504" y="327" width="40" height="2" fill="#c43a2c" fill-opacity="0.8" filter="url(#bl)"/>
<rect x="504" y="365" width="11" height="2" fill="#c43a2c" fill-opacity="0.8" filter="url(#bl)"/>
<rect x="516" y="222" width="39" height="2" fill="#c43a2c" fill-opacity="0.8" filter="url(#bl)"/>
<rect x="694" y="226" width="29" height="2" fill="#c43a2c" fill-opacity="0.8" filter="url(#bl)"/>
<rect x="530" y="300" width="30" height="2" fill="#c43a2c" fill-opacity="0.8" filter="url(#bl)"/>
<rect x="650" y="300" width="50" height="2" fill="#c43a2c" fill-opacity="0.8" filter="url(#bl)"/>
<rect x="520" y="390" width="40" height="2" fill="#c43a2c" fill-opacity="0.8" filter="url(#bl)"/>
<rect x="582" y="165" width="2" height="1.5" fill="#3b4cc0"/>
<rect x="521" y="166" width="2" height="1.5" fill="#3b4cc0"/>
<rect x="644" y="167" width="2" height="1.5" fill="#b40426"/>
<rect x="513" y="166" width="2" height="1.5" fill="#3b4cc0"/>
<rect x="562" y="166" width="2" height="1.5" fill="#3b4cc0"/>
<rect x="702" y="164" width="2" height="1.5" fill="#b40426"/>
<rect x="655" y="166" width="2" height="1.5" fill="#3b4cc0"/>
<rect x="643" y="165" width="2" height="1.5" fill="#b40426"/>
<rect x="515" y="167" width="2" height="1.5" fill="#3b4cc0"/>
<rect x="605" y="166" width="2" height="1.5" fill="#3b4cc0"/>
<rect x="638" y="166" width="2" height="1.5" fill="#3b4cc0"/>
<rect x="644" y="166" width="2" height="1.5" fill="#3b4cc0"/>
<rect x="527" y="166" width="2" height="1.5" fill="#3b4cc0"/>
<rect x="653" y="166" width="2" height="1.5" fill="#d04030"/>
<rect x="691" y="166" width="2" height="1.5" fill="#d04030"/>
<rect x="591" y="165" width="2" height="1.5" fill="#b40426"/>
<rect x="672" y="165" width="2" height="1.5" fill="#3b4cc0"/>
<rect x="630" y="167" width="2" height="1.5" fill="#d04030"/>
<rect x="573" y="167" width="2" height="1.5" fill="#3b4cc0"/>
<rect x="627" y="165" width="2" height="1.5" fill="#3b4cc0"/>
<rect x="540" y="166" width="2" height="1.5" fill="#3b4cc0"/>
<rect x="735" y="164" width="2" height="1.5" fill="#3b4cc0"/>
<rect x="586" y="165" width="2" height="1.5" fill="#d04030"/>
<rect x="643" y="166" width="2" height="1.5" fill="#3b4cc0"/>
<rect x="731" y="166" width="2" height="1.5" fill="#3b4cc0"/>
<rect x="519" y="166" width="2" height="1.5" fill="#d04030"/>
<rect x="572" y="165" width="2" height="1.5" fill="#3b4cc0"/>
<rect x="509" y="166" width="2" height="1.5" fill="#b40426"/>
<rect x="651" y="166" width="2" height="1.5" fill="#b40426"/>
<rect x="688" y="164" width="2" height="1.5" fill="#b40426"/>
<rect x="599" y="167" width="2" height="1.5" fill="#d04030"/>
<rect x="523" y="166" width="2" height="1.5" fill="#3b4cc0"/>
<rect x="716" y="167" width="2" height="1.5" fill="#3b4cc0"/>
<rect x="674" y="167" width="2" height="1.5" fill="#d04030"/>
<rect x="734" y="165" width="2" height="1.5" fill="#b40426"/>
<rect x="540" y="166" width="2" height="1.5" fill="#3b4cc0"/>
<rect x="620" y="166" width="2" height="1.5" fill="#3b4cc0"/>
<rect x="572" y="165" width="2" height="1.5" fill="#3b4cc0"/>
<rect x="650" y="165" width="2" height="1.5" fill="#b40426"/>
<rect x="670" y="166" width="2" height="1.5" fill="#3b4cc0"/>
<rect x="614" y="167" width="2" height="1.5" fill="#d04030"/>
<rect x="600" y="165" width="2" height="1.5" fill="#d04030"/>
<rect x="656" y="164" width="2" height="1.5" fill="#3b4cc0"/>
<rect x="740" y="166" width="2" height="1.5" fill="#3b4cc0"/>
<rect x="586" y="164" width="2" height="1.5" fill="#3b4cc0"/>
<rect x="640" y="166" width="2" height="1.5" fill="#3b4cc0"/>
<rect x="651" y="164" width="2" height="1.5" fill="#b40426"/>
<rect x="651" y="165" width="2" height="1.5" fill="#3b4cc0"/>
<rect x="733" y="166" width="2" height="1.5" fill="#d04030"/>
<rect x="533" y="167" width="2" height="1.5" fill="#d04030"/>
<rect x="619" y="165" width="2" height="1.5" fill="#b40426"/>
<rect x="529" y="165" width="2" height="1.5" fill="#3b4cc0"/>
<rect x="619" y="166" width="2" height="1.5" fill="#3b4cc0"/>
<rect x="553" y="167" width="2" height="1.5" fill="#3b4cc0"/>
<rect x="539" y="166" width="2" height="1.5" fill="#3b4cc0"/>
<rect x="686" y="165" width="2" height="1.5" fill="#3b4cc0"/>
<rect x="671" y="165" width="2" height="1.5" fill="#3b4cc0"/>
<rect x="722" y="165" width="2" height="1.5" fill="#b40426"/>
<rect x="632" y="167" width="2" height="1.5" fill="#3b4cc0"/>
<rect x="657" y="166" width="2" height="1.5" fill="#b40426"/>
<rect x="697" y="167" width="2" height="1.5" fill="#b40426"/>
<rect x="552" y="166" width="2" height="1.5" fill="#3b4cc0"/>
<rect x="742" y="167" width="2" height="1.5" fill="#d04030"/>
<rect x="566" y="166" width="2" height="1.5" fill="#3b4cc0"/>
<rect x="611" y="167" width="2" height="1.5" fill="#3b4cc0"/>
<rect x="733" y="165" width="2" height="1.5" fill="#b40426"/>
<rect x="529" y="166" width="2" height="1.5" fill="#3b4cc0"/>
<rect x="553" y="166" width="2" height="1.5" fill="#3b4cc0"/>
<rect x="619" y="166" width="2" height="1.5" fill="#3b4cc0"/>
<rect x="704" y="164" width="2" height="1.5" fill="#d04030"/>
<rect x="692" y="167" width="2" height="1.5" fill="#d04030"/>
<rect x="717" y="166" width="2" height="1.5" fill="#3b4cc0"/>
<rect x="525" y="167" width="2" height="1.5" fill="#d04030"/>
<rect x="615" y="167" width="2" height="1.5" fill="#3b4cc0"/>
<rect x="678" y="165" width="2" height="1.5" fill="#b40426"/>
<rect x="511" y="166" width="2" height="1.5" fill="#d04030"/>
<rect x="698" y="165" width="2" height="1.5" fill="#d04030"/>
<rect x="662" y="165" width="2" height="1.5" fill="#b40426"/>
<rect x="509" y="167" width="2" height="1.5" fill="#3b4cc0"/>
<rect x="630" y="167" width="2" height="1.5" fill="#d04030"/>
<rect x="741" y="165" width="2" height="1.5" fill="#b40426"/>
<rect x="511" y="165" width="2" height="1.5" fill="#b40426"/>
<rect x="687" y="165" width="2" height="1.5" fill="#d04030"/>
<rect x="704" y="164" width="2" height="1.5" fill="#3b4cc0"/>
<rect x="719" y="166" width="2" height="1.5" fill="#d04030"/>
<rect x="703" y="167" width="2" height="1.5" fill="#b40426"/>
<rect x="632" y="166" width="2" height="1.5" fill="#3b4cc0"/>
<rect x="713" y="167" width="2" height="1.5" fill="#3b4cc0"/>
<rect x="690" y="165" width="2" height="1.5" fill="#b40426"/>
<rect x="618" y="167" width="2" height="1.5" fill="#3b4cc0"/>
<rect x="582" y="166" width="2" height="1.5" fill="#d04030"/>
<rect x="692" y="164" width="2" height="1.5" fill="#3b4cc0"/>
<rect x="564" y="165" width="2" height="1.5" fill="#3b4cc0"/>
<rect x="626" y="166" width="2" height="1.5" fill="#3b4cc0"/>
<rect x="610" y="166" width="2" height="1.5" fill="#b40426"/>
<rect x="670" y="166" width="2" height="1.5" fill="#d04030"/>
<rect x="626" y="165" width="2" height="1.5" fill="#3b4cc0"/>
<rect x="725" y="167" width="2" height="1.5" fill="#b40426"/>
<rect x="706" y="164" width="2" height="1.5" fill="#3b4cc0"/>
<rect x="598" y="165" width="2" height="1.5" fill="#b40426"/>
<rect x="607" y="165" width="2" height="1.5" fill="#3b4cc0"/>
<rect x="692" y="167" width="2" height="1.5" fill="#b40426"/>
<rect x="729" y="166" width="2" height="1.5" fill="#3b4cc0"/>
<rect x="538" y="167" width="2" height="1.5" fill="#d04030"/>
<rect x="557" y="167" width="2" height="1.5" fill="#d04030"/>
<rect x="716" y="165" width="2" height="1.5" fill="#b40426"/>
<rect x="543" y="166" width="2" height="1.5" fill="#d04030"/>
<rect x="585" y="165" width="2" height="1.5" fill="#3b4cc0"/>
<rect x="526" y="165" width="2" height="1.5" fill="#3b4cc0"/>
<rect x="637" y="166" width="2" height="1.5" fill="#3b4cc0"/>
<rect x="596" y="166" width="2" height="1.5" fill="#3b4cc0"/>
<rect x="627" y="164" width="2" height="1.5" fill="#b40426"/>
<rect x="737" y="164" width="2" height="1.5" fill="#3b4cc0"/>
<rect x="569" y="167" width="2" height="1.5" fill="#b40426"/>
<rect x="569" y="164" width="2" height="1.5" fill="#d04030"/>
<rect x="708" y="166" width="2" height="1.5" fill="#3b4cc0"/>
<rect x="601" y="166" width="2" height="1.5" fill="#d04030"/>
<rect x="672" y="164" width="2" height="1.5" fill="#3b4cc0"/>
<rect x="696" y="165" width="2" height="1.5" fill="#3b4cc0"/>
<rect x="569" y="164" width="2" height="1.5" fill="#3b4cc0"/>
<rect x="696" y="164" width="2" height="1.5" fill="#b40426"/>
<rect x="520" y="167" width="2" height="1.5" fill="#d04030"/>
<rect x="507" y="167" width="2" height="1.5" fill="#d04030"/>
<rect x="726" y="165" width="2" height="1.5" fill="#b40426"/>
<rect x="514" y="166" width="2" height="1.5" fill="#3b4cc0"/>
<rect x="737" y="165" width="2" height="1.5" fill="#b40426"/>
<rect x="552" y="165" width="2" height="1.5" fill="#3b4cc0"/>
<rect x="631" y="165" width="2" height="1.5" fill="#d04030"/>
<rect x="624" y="165" width="2" height="1.5" fill="#3b4cc0"/>
<rect x="697" y="167" width="2" height="1.5" fill="#3b4cc0"/>
<rect x="508" y="167" width="2" height="1.5" fill="#b40426"/>
<rect x="627" y="165" width="2" height="1.5" fill="#d04030"/>
<rect x="530" y="167" width="2" height="1.5" fill="#d04030"/>
<rect x="662" y="166" width="2" height="1.5" fill="#d04030"/>
<rect x="737" y="165" width="2" height="1.5" fill="#b40426"/>
<rect x="740" y="165" width="2" height="1.5" fill="#b40426"/>
<rect x="601" y="165" width="2" height="1.5" fill="#3b4cc0"/>
<rect x="705" y="164" width="2" height="1.5" fill="#3b4cc0"/>
<rect x="607" y="164" width="2" height="1.5" fill="#d04030"/>
<rect x="713" y="166" width="2" height="1.5" fill="#3b4cc0"/>
<rect x="579" y="409" width="2" height="1" fill="#b02030"/>
<rect x="510" y="408" width="2" height="1" fill="#b02030"/>
<rect x="538" y="407" width="2" height="1" fill="#b02030"/>
<rect x="550" y="408" width="2" height="1" fill="#b02030"/>
<rect x="628" y="408" width="2" height="1" fill="#b02030"/>
<rect x="508" y="410" width="2" height="1" fill="#b02030"/>
<rect x="531" y="408" width="2" height="1" fill="#b02030"/>
<rect x="546" y="407" width="2" height="1" fill="#b02030"/>
<rect x="539" y="409" width="2" height="1" fill="#b02030"/>
<rect x="535" y="409" width="2" height="1" fill="#b02030"/>
<rect x="515" y="409" width="2" height="1" fill="#b02030"/>
<rect x="522" y="409" width="2" height="1" fill="#b02030"/>
<rect x="554" y="408" width="2" height="1" fill="#b02030"/>
<rect x="583" y="407" width="2" height="1" fill="#b02030"/>
<rect x="625" y="410" width="2" height="1" fill="#b02030"/>
<rect x="524" y="410" width="2" height="1" fill="#b02030"/>
<rect x="603" y="409" width="2" height="1" fill="#b02030"/>
<rect x="600" y="409" width="2" height="1" fill="#b02030"/>
<rect x="566" y="408" width="2" height="1" fill="#b02030"/>
<rect x="582" y="407" width="2" height="1" fill="#b02030"/>
<rect x="608" y="409" width="2" height="1" fill="#b02030"/>
<rect x="569" y="408" width="2" height="1" fill="#b02030"/>
<rect x="592" y="409" width="2" height="1" fill="#b02030"/>
<rect x="619" y="409" width="2" height="1" fill="#b02030"/>
<rect x="576" y="409" width="2" height="1" fill="#b02030"/>
<rect x="506" y="409" width="2" height="1" fill="#b02030"/>
<rect x="605" y="409" width="2" height="1" fill="#b02030"/>
<rect x="624" y="409" width="2" height="1" fill="#b02030"/>
<rect x="515" y="407" width="2" height="1" fill="#b02030"/>
<rect x="584" y="410" width="2" height="1" fill="#b02030"/>
<rect x="551" y="408" width="2" height="1" fill="#b02030"/>
<rect x="510" y="407" width="2" height="1" fill="#b02030"/>
<rect x="571" y="408" width="2" height="1" fill="#b02030"/>
<rect x="537" y="408" width="2" height="1" fill="#b02030"/>
<rect x="513" y="410" width="2" height="1" fill="#b02030"/>
<rect x="617" y="407" width="2" height="1" fill="#b02030"/>
<rect x="570" y="409" width="2" height="1" fill="#b02030"/>
<rect x="564" y="409" width="2" height="1" fill="#b02030"/>
<rect x="611" y="408" width="2" height="1" fill="#b02030"/>
<rect x="599" y="408" width="2" height="1" fill="#b02030"/>
<rect x="630" y="292" width="114" height="115" fill="#ddd" filter="url(#fb)"/>
<rect x="630" y="292" width="114" height="115" fill="url(#zb)"/>
<defs><linearGradient id="cb" x1="0" y1="1" x2="0" y2="0"><stop offset="0.0" stop-color="rgb(58,76,192)"/><stop offset="0.125" stop-color="rgb(95,125,224)"/><stop offset="0.25" stop-color="rgb(140,175,253)"/><stop offset="0.375" stop-color="rgb(180,207,249)"/><stop offset="0.5" stop-color="rgb(220,220,220)"/><stop offset="0.625" stop-color="rgb(244,194,171)"/><stop offset="0.75" stop-color="rgb(244,154,123)"/><stop offset="0.875" stop-color="rgb(223,100,77)"/><stop offset="1.0" stop-color="rgb(180,4,38)"/></linearGradient></defs>
<rect x="882" y="409" width="16" height="155" fill="url(#cb)"/>
<rect x="894.5" y="409" width="12" height="1" fill="#f4f4f4"/>
<rect x="894.5" y="459" width="12" height="1" fill="#f4f4f4"/>
<rect x="894.5" y="494" width="12" height="1" fill="#f4f4f4"/>
<rect x="894.5" y="529" width="12" height="1" fill="#f4f4f4"/>
<rect x="894.5" y="563" width="12" height="1" fill="#f4f4f4"/>
<text x="911.5" y="413.2" font-family="Liberation Sans" font-size="17" fill="#ececf0">4.4e+02</text>
<text x="911.5" y="463.2" font-family="Liberation Sans" font-size="17" fill="#ececf0">300</text>
<text x="911.5" y="498.2" font-family="Liberation Sans" font-size="17" fill="#ececf0">200</text>
<text x="911.5" y="533.2" font-family="Liberation Sans" font-size="17" fill="#ececf0">100</text>
<text x="911.5" y="567.2" font-family="Liberation Sans" font-size="17" fill="#ececf0">0.0e+00</text>
<text transform="translate(988.6,549.5) rotate(-90)" font-family="Liberation Sans" font-size="17.3" fill="#ececf0">result Magnitude</text>
<path d="M406.8,517 V489" stroke="#d8d820" stroke-width="1.2"/><path d="M404.3,490 L406.8,485.3 L409.3,490 Z" fill="#e0e020"/>
<path d="M407,517.5 H433" stroke="#d02020" stroke-width="1.2"/><path d="M433,515 L439,517.5 L433,520 Z" fill="#e02020"/>
<circle cx="407" cy="517" r="2.7" fill="#0a600a"/>
<text x="409" y="491" font-family="Liberation Sans" font-size="9" fill="#fff">Y</text>
<text x="409.5" y="514.5" font-family="Liberation Sans" font-size="9" fill="#fff">Z</text>
<text x="434.5" y="516" font-family="Liberation Sans" font-size="9" fill="#fff">X</text>
</svg>
</div>
<!-- status bar -->
<div class="btn" style="left:491px;top:584px;width:20px;height:19px;border-color:#c8c8c8;border-radius:2px"></div>
<svg class="a" style="left:496px;top:589px" width="10" height="9"><path d="M1.5,1.5 L8.5,7.5 M8.5,1.5 L1.5,7.5" stroke="#a0a0a0" stroke-width="2.2"/></svg>
<div class="a" style="left:513px;top:584px;width:466px;height:19px;border-top:1px solid #a0a0a0;border-left:1px solid #a0a0a0;border-right:1px solid #fff;border-bottom:1px solid #fff"></div>
<svg class="a" style="left:990px;top:592px" width="12" height="12"><g fill="#a0a0a0"><rect x="9" y="1" width="1.5" height="1.5"/><rect x="6" y="4" width="1.5" height="1.5"/><rect x="9" y="4" width="1.5" height="1.5"/><rect x="3" y="7" width="1.5" height="1.5"/><rect x="6" y="7" width="1.5" height="1.5"/><rect x="9" y="7" width="1.5" height="1.5"/><rect x="0" y="10" width="1.5" height="1.5"/><rect x="3" y="10" width="1.5" height="1.5"/><rect x="6" y="10" width="1.5" height="1.5"/><rect x="9" y="10" width="1.5" height="1.5"/></g></svg>


<!-- window frame -->
<div class="a" style="left:0;top:0;width:1004px;height:1px;background:#646464"></div>
<div class="a" style="left:0;top:0;width:1px;height:606px;background:#646464"></div>
<div class="a" style="left:1003px;top:0;width:1px;height:606px;background:#646464"></div>
<div class="a" style="left:0;top:605px;width:1004px;height:1px;background:#646464"></div>
</body></html>
